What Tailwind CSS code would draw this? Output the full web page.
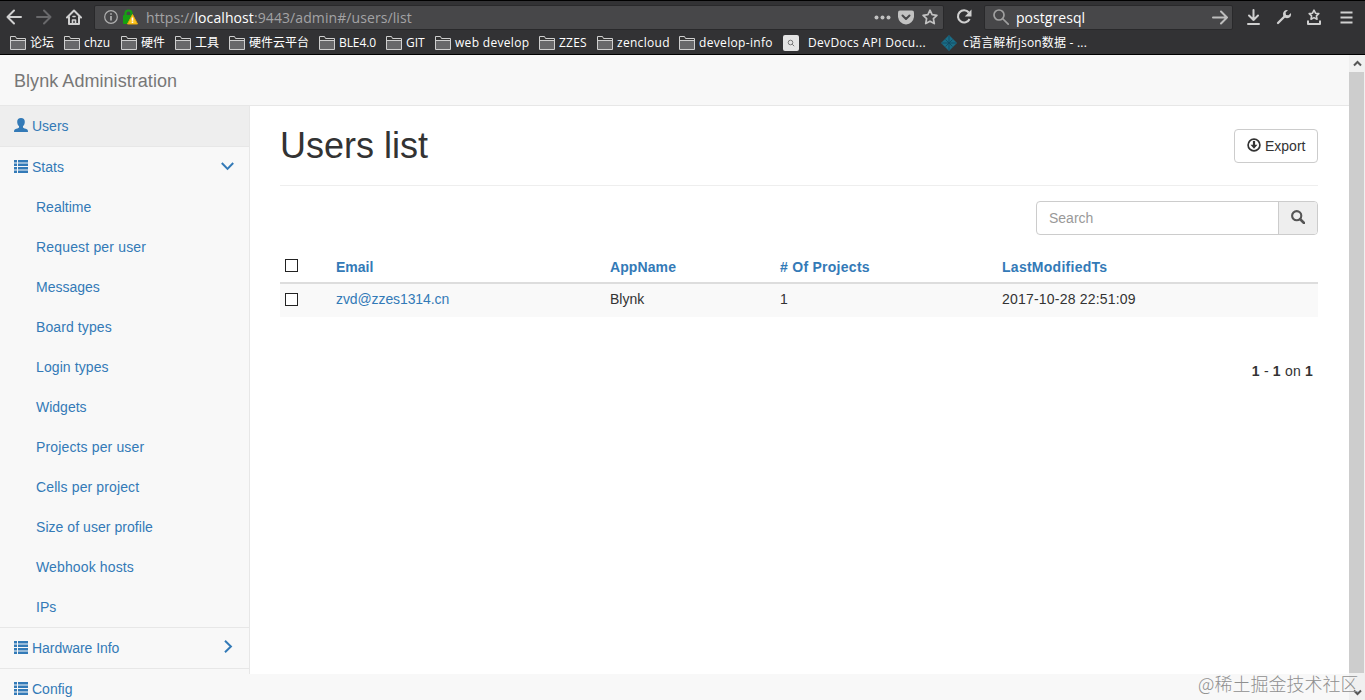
<!DOCTYPE html>
<html lang="en">
<head>
<meta charset="utf-8">
<title>Blynk Administration</title>
<script src="https://cdn.jsdelivr.net/npm/@tailwindcss/browser@4"></script>
</head>
<body class="h-[700px] w-[1365px] overflow-hidden bg-[#f8f8f8] font-['Liberation_Sans',Arial,sans-serif] text-sm leading-5 text-[#333]">
<svg class="hidden">
  <symbol id="folder" viewBox="0 0 16 14"><path d="M.5 12.5v-12h5l1.500 2h8.500v10.500H.5z" fill="#343434"/><rect x="1" y="5" width="14" height="8" fill="#68686a"/><path d="M.5 13.500V.5h5l1 2h9v11zM.5 4.500h15" fill="none" stroke="#cfcfcf"/></symbol>
  <symbol id="list" viewBox="0 0 14 13"><path d="M0 0h3v2.500H0zM4 0h10v2.500H4zM0 3.500h3V6H0zM4 3.500h10V6H4zM0 7h3v2.500H0zM4 7h10v2.500H4zM0 10.500h3V13H0zM4 10.500h10V13H4z" fill="currentColor"/></symbol>
</svg>
<header class="flex h-[55px] flex-col border-y border-black bg-[#323234] font-['Open_Sans','Noto_Sans_CJK_SC',sans-serif] text-white">
  <div class="flex h-[29px] shrink-0 items-center pt-[3px] text-[#d0d0d0]">
    <svg class="ml-[6px]" width="16" height="16" viewBox="0 0 16 16" fill="none" stroke="currentColor" stroke-width="2" stroke-linecap="round" stroke-linejoin="round"><path d="M15 8H1.500M8 1.500 1.500 8 8 14.500"/></svg>
    <svg class="ml-[14px] text-[#69696b]" width="16" height="16" viewBox="0 0 16 16" fill="none" stroke="currentColor" stroke-width="2" stroke-linecap="round" stroke-linejoin="round"><path d="M1 8h13.500M8 1.500 14.500 8 8 14.500"/></svg>
    <svg class="ml-[14px]" width="16" height="16" viewBox="0 0 16 16" fill="none" stroke="currentColor" stroke-width="2" stroke-linejoin="round" stroke-linecap="round"><path d="M1 8.500 8 1.500l7 7M3 8v7h10V8"/><path d="M6.500 15v-4h3v4M7 7.500h2" stroke-width="1.600"/></svg>
    <div class="ml-[12px] flex h-[25px] w-[850px] items-center rounded-[2px] border border-[#29292b] bg-[#474749]">
      <svg class="ml-[9px]" width="14" height="14" viewBox="0 0 14 14" fill="none" stroke="#b0b0b0" stroke-width="1.200"><circle cx="7" cy="7" r="6.300"/><path d="M7 6v4.500M7 3.200v1.600" stroke-width="1.700"/></svg>
      <svg class="ml-[4px]" width="16" height="16" viewBox="0 0 16 16"><path d="M3.500 7V4.500a3 3 0 0 1 6 0V7" fill="none" stroke="#16a012" stroke-width="2.200"/><rect x="1" y="6" width="10" height="9" rx="1" fill="#16a012"/><path d="m10.500 5.500 5 9.500h-10z" fill="#fcc41f" stroke="#e8a90c" stroke-linejoin="round"/><path d="M10.500 8.500v3.300m0 .8v1.500" stroke="#fff" stroke-width="1.500"/></svg>
      <span class="ml-[8px] w-[728px] pt-px text-[14px] tracking-[0.09px] whitespace-nowrap text-[#a3a3a5]">https://<span class="text-white">localhost</span>:9443/admin#/users/list</span>
      <svg width="17" height="5" viewBox="0 0 17 5" fill="#c2c2c2"><circle cx="2.500" cy="2.500" r="2"/><circle cx="8.500" cy="2.500" r="2"/><circle cx="14.500" cy="2.500" r="2"/></svg>
      <svg class="ml-[7px]" width="16" height="15" viewBox="0 0 16 15"><path d="M2 .5h12q2 0 2 2V7q-1 6.500-8 7.500Q1 13.500 0 7V2.500Q0 .5 2 .5z" fill="#c2c2c2"/><path d="M4.500 5.500 8 9l3.500-3.500" fill="none" stroke="#474749" stroke-width="2" stroke-linecap="round" stroke-linejoin="round"/></svg>
      <svg class="ml-[8px]" width="16" height="16" viewBox="0 0 16 16"><path d="m8 1.200 2.100 4.500 4.800.6-3.500 3.400.9 4.900L8 12.200l-4.300 2.400.9-4.900L1.100 6.300l4.800-.6z" fill="none" stroke="#c2c2c2" stroke-width="1.700" stroke-linejoin="round"/></svg>
    </div>
    <svg class="ml-[12px]" width="17" height="16" viewBox="0 0 17 16"><path d="M12.800 3.500A6.100 6.100 0 1 0 13.600 10" fill="none" stroke="currentColor" stroke-width="2.100"/><path d="M15.500.5v7H8.800z" fill="currentColor"/></svg>
    <div class="ml-[11px] flex h-[25px] w-[249px] items-center rounded-[2px] border border-[#29292b] bg-[#474749]">
      <svg class="ml-[8px]" width="16" height="16" viewBox="0 0 16 16" fill="none" stroke="#a0a0a0" stroke-width="1.700" stroke-linecap="round"><circle cx="6" cy="6" r="5"/><path d="m10 10 5.200 5.200"/></svg>
      <span class="ml-[7px] w-[196px] pt-px text-[14px] tracking-[0.05px] text-white">postgresql</span>
      <svg width="16" height="15" viewBox="0 0 16 15" fill="none" stroke="#bdbdbd" stroke-width="2" stroke-linecap="round" stroke-linejoin="round"><path d="M1 7.500h14M9 1.500l6 6-6 6"/></svg>
    </div>
    <svg class="ml-[14px]" width="13" height="16" viewBox="0 0 13 16" fill="none" stroke="currentColor" stroke-width="2" stroke-linecap="round" stroke-linejoin="round"><path d="M6.500 1v10M2 6.500 6.500 11 11 6.500M1 15h11"/></svg>
    <svg class="ml-[16px]" width="16" height="16" viewBox="0 0 16 16"><path d="m2 14 7-7" stroke="currentColor" stroke-width="2.300" stroke-linecap="round"/><path d="M12 1 9.600 3.500l.4 2.500 2.500.3L15 4q.8 5-4 5.200-4.200-.4-4-4.400Q7.500.5 12 1z" fill="currentColor"/></svg>
    <svg class="ml-[14px]" width="16" height="16" viewBox="0 0 16 16" fill="none" stroke="currentColor" stroke-width="1.600" stroke-linejoin="round"><path d="m8 1.200 1.500 3 3.300.4-2.400 2.300.6 3.300-3-1.600-3 1.600.6-3.300-2.400-2.300 3.300-.4z"/><path d="M2 11.500V15h12v-3.500" stroke-width="2"/></svg>
    <svg class="ml-[18px]" width="13" height="13" viewBox="0 0 13 13"><path d="M.5 1.500h12m-12 5h12m-12 5h12" stroke="currentColor" stroke-width="2"/></svg>
  </div>
  <nav class="flex h-6 shrink-0 items-center pt-[2px] pl-[10px] text-[12px] whitespace-nowrap">
    <div class="flex w-[54px] items-center gap-1"><svg width="16" height="14"><use href="#folder"/></svg>论坛</div>
    <div class="flex w-[57px] items-center gap-1"><svg width="16" height="14"><use href="#folder"/></svg>chzu</div>
    <div class="flex w-[54px] items-center gap-1"><svg width="16" height="14"><use href="#folder"/></svg>硬件</div>
    <div class="flex w-[54px] items-center gap-1"><svg width="16" height="14"><use href="#folder"/></svg>工具</div>
    <div class="flex w-[90px] items-center gap-1"><svg width="16" height="14"><use href="#folder"/></svg>硬件云平台</div>
    <div class="flex w-[67px] items-center gap-1 tracking-[-0.1px]"><svg width="16" height="14"><use href="#folder"/></svg>BLE4.0</div>
    <div class="flex w-[49px] items-center gap-1"><svg width="16" height="14"><use href="#folder"/></svg>GIT</div>
    <div class="flex w-[104px] items-center gap-1 tracking-[0.32px]"><svg width="16" height="14"><use href="#folder"/></svg>web develop</div>
    <div class="flex w-[58px] items-center gap-1 tracking-[0.2px]"><svg width="16" height="14"><use href="#folder"/></svg>ZZES</div>
    <div class="flex w-[82px] items-center gap-1 tracking-[0.3px]"><svg width="16" height="14"><use href="#folder"/></svg>zencloud</div>
    <div class="flex w-[104px] items-center gap-1 tracking-[0.33px]"><svg width="16" height="14"><use href="#folder"/></svg>develop-info</div>
    <div class="flex w-[158px] items-center gap-[9px] tracking-[0.33px]"><svg width="16" height="16" viewBox="0 0 16 16"><rect width="16" height="16" rx="2" fill="#e4e4e4"/><g fill="none" stroke="#777"><circle cx="7.500" cy="7.500" r="2.300"/><path d="m9.200 9.200 2 2"/></g></svg>DevDocs API Docu...</div>
    <div class="flex items-center gap-[6px] tracking-[0.2px]"><svg width="16" height="16" viewBox="0 0 16 16"><path d="m8 0 8 8-8 8-8-8z" fill="#1a6d86"/><path d="M8 1v14M1 8h14M4.500 4.500l7 7M11.500 4.500l-7 7" stroke="#12475f" stroke-width=".8"/></svg>c语言解析json数据 - ...</div>
  </nav>
</header>
<div class="flex h-[645px]">
  <div class="w-[1349px]">
    <div class="h-[51px] border-b border-[#e7e7e7] pt-4 pl-[14px] text-lg leading-5 tracking-[0.05px] text-[#777]">Blynk Administration</div>
    <div class="flex items-start">
      <aside class="w-[250px] shrink-0 text-[#337ab7]">
        <div class="h-[568px] border-r border-[#e7e7e7]">
          <div class="flex h-[41px] items-center border-b border-[#e7e7e7] bg-[#eee] pl-[14px]"><svg class="mb-[2px]" width="14" height="14" viewBox="0 0 14 14" fill="currentColor"><path d="M7 0c2.500 0 3.900 1.400 3.800 3.900-.1 2-.7 3.200-1.800 4.200v1.200c0 .7 1 1 2.800 1.500 1.700.6 2.200 1.300 2.200 3.200H0c0-1.900.5-2.600 2.200-3.200C4 10.300 5 10 5 9.300V8.100C3.900 7.100 3.300 5.900 3.200 3.900 3.100 1.400 4.500 0 7 0z"/></svg><span class="ml-1">Users</span></div>
          <div class="flex h-10 items-center pl-[14px]"><svg class="mb-px" width="14" height="13"><use href="#list"/></svg><span class="ml-1 w-[189px]">Stats</span><svg class="mb-[2px]" width="13" height="9" viewBox="0 0 13 9" fill="none" stroke="currentColor" stroke-width="2"><path d="m.8 1 5.700 5.900L12.200 1"/></svg></div>
          <ul class="border-b border-[#e7e7e7] pl-9 leading-10">
            <li>Realtime</li><li class="tracking-[0.17px]">Request per user</li><li>Messages</li><li class="tracking-[0.1px]">Board types</li><li class="tracking-[0.1px]">Login types</li><li>Widgets</li><li class="tracking-[0.14px]">Projects per user</li><li class="tracking-[0.12px]">Cells per project</li><li class="tracking-[0.05px]">Size of user profile</li><li class="tracking-[0.13px]">Webhook hosts</li><li>IPs</li>
          </ul>
          <div class="flex h-[41px] items-center border-b border-[#e7e7e7] pl-[14px]"><svg class="mb-px" width="14" height="13"><use href="#list"/></svg><span class="ml-1 w-[192px] tracking-[-0.05px]">Hardware Info</span><svg class="mb-[3px]" width="9" height="13" viewBox="0 0 9 13" fill="none" stroke="currentColor" stroke-width="2"><path d="m1 .8 5.900 5.700L1 12.200"/></svg></div>
        </div>
        <div class="flex h-[30px] items-center pl-[14px]"><svg class="mb-px" width="14" height="13"><use href="#list"/></svg><span class="ml-1">Config</span></div>
      </aside>
      <main class="h-[568px] flex-1 bg-white pr-[31px] pl-[30px]">
        <div class="flex h-20 items-start justify-between border-b border-[#eee]">
          <h1 class="pt-5 text-4xl leading-10">Users list</h1>
          <button class="mt-[23px] flex h-[34px] w-[84px] items-center rounded border border-[#ccc] pl-3"><svg class="mb-[2px]" width="14" height="14" viewBox="0 0 14 14"><circle cx="7" cy="7" r="5.900" fill="none" stroke="currentColor" stroke-width="1.700"/><path d="M5.900 3h2.200v3.700h2.400L7 10.700 3.500 6.700h2.400z" fill="currentColor"/></svg><span class="ml-1">Export</span></button>
        </div>
        <div class="mt-[15px] ml-auto flex h-[34px] w-[282px] overflow-hidden rounded border border-[#ccc]">
          <div class="flex-1 pt-[6px] pl-3 text-[#999]">Search</div>
          <div class="flex w-[39px] items-center justify-center border-l border-[#ccc] bg-[#eee] text-[#555]"><svg class="mb-[2px]" width="14" height="14" viewBox="0 0 14 14" fill="none" stroke="currentColor"><circle cx="5.700" cy="5.700" r="4.600" stroke-width="2.100"/><path d="m9 9 4 4" stroke-width="2.500" stroke-linecap="round"/></svg></div>
        </div>
        <div class="mt-4">
          <div class="grid h-[33px] grid-cols-[56px_274px_170px_222px_1fr] items-center border-b-2 border-[#ddd] font-bold text-[#337ab7]"><i class="mb-[3px] ml-[5px] size-[13px] border border-[#222] bg-white"></i><span>Email</span><span class="tracking-[0.1px]">AppName</span><span class="tracking-[0.27px]"># Of Projects</span><span class="tracking-[0.27px]">LastModifiedTs</span></div>
          <div class="grid h-[33px] grid-cols-[56px_274px_170px_222px_1fr] items-center bg-[#f9f9f9] pb-[3px]"><i class="mt-px ml-[5px] size-[13px] border border-[#222] bg-white"></i><span class="tracking-[-0.1px] text-[#337ab7]">zvd@zzes1314.cn</span><span>Blynk</span><span>1</span><span class="tracking-[0.2px]">2017-10-28 22:51:09</span></div>
        </div>
        <div class="mt-[44px] pr-[5px] text-right tracking-[0.2px]"><b>1</b> - <b>1</b> on <b>1</b></div>
      </main>
    </div>
  </div>
  <div class="relative w-4 bg-[#f0f0f0]">
    <div class="flex h-[17px] items-center justify-center"><svg width="9" height="7" viewBox="0 0 9 7"><path d="m1 5.500 3.500-3.500L8 5.500" fill="none" stroke="#555" stroke-width="2"/></svg></div>
    <div class="h-[601px] w-[15px] bg-[#cdcdcd]"></div>
    <div class="flex h-[27px] items-end justify-center pb-1"><svg width="9" height="7" viewBox="0 0 9 7"><path d="m1 1.500 3.500 3.500L8 1.500" fill="none" stroke="#555" stroke-width="2"/></svg></div>
  </div>
</div>
<div class="absolute top-[671px] left-[1198px] font-['Noto_Sans_CJK_SC',sans-serif] text-[18px] leading-6 font-light whitespace-nowrap text-[#8f8f8f]">@稀土掘金技术社区</div>
</body>
</html>
